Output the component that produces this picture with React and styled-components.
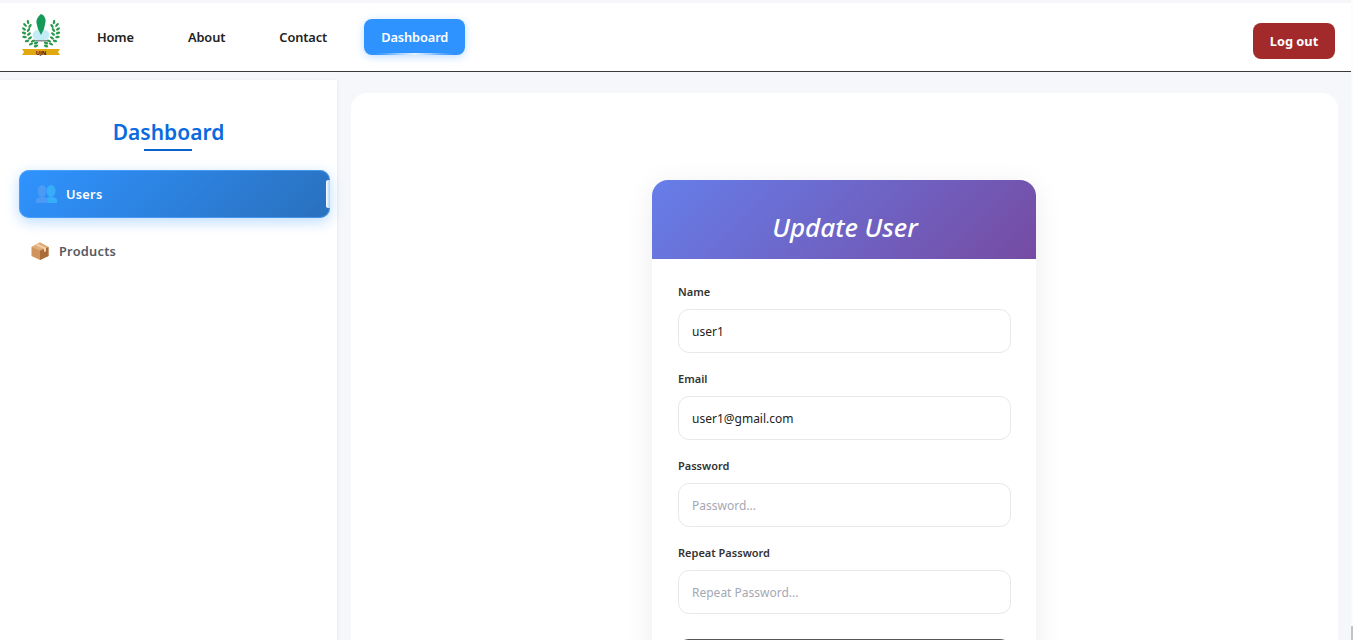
import React from 'react'
import styled, { createGlobalStyle } from 'styled-components'

const GlobalStyle = createGlobalStyle`
  body {
    margin: 0;
    background: #f6f7fa;
    font-family: "Noto Sans", "Open Sans", sans-serif;
    color: #222;
  }
  * {
    box-sizing: border-box;
  }
`

// leaves along one side of the wreath, the other side is mirrored
const leaves = [
  [7, 9, -10],
  [4, 12, -45],
  [9, 13, 35],
  [3, 16, -55],
  [7.5, 17, 40],
  [3, 20, -70],
  [8, 21, 50],
  [3.5, 24, -85],
  [9, 25, 55],
  [6, 28, -105],
  [12, 28, 65],
  [10, 31, -115],
  [15, 30, 70],
  [15, 33, -110],
]

const Wreath = ({ mirror }) => (
  <g transform={mirror ? 'translate(40 0) scale(-1 1)' : undefined} fill="#2b9a4c">
    {leaves.map(([x, y, r]) => (
      <ellipse key={`${x}-${y}`} cx={x} cy={y} rx="1.200" ry="2.300" transform={`rotate(${r} ${x} ${y})`} />
    ))}
  </g>
)

const Logo = () => (
  <svg width="40" height="44" viewBox="0 0 40 44">
    <ellipse cx="20" cy="22" rx="8.500" ry="6" fill="#c4ecf6" />
    <path d="M20 1c3 1 5 4 4.500 8l-1.500 7-3 6-3-6-1.500-6c-.5-4 2-7 4.500-9z" fill="#159a58" />
    <rect x="11" y="27" width="18" height="1.500" fill="#8a8f8f" />
    <Wreath />
    <Wreath mirror />
    <path d="M1 36h38l-2 3 2 3H1l2-3z" fill="#e2a80f" />
    <text x="20" y="41.500" textAnchor="middle" fontSize="5.500" fontWeight="700" fill="#222">UJN</text>
  </svg>
)

const UsersIcon = () => (
  <svg width="21" height="18" viewBox="0 0 21 18">
    <ellipse cx="15" cy="6" rx="4.500" ry="6" fill="#38aefa" />
    <path d="M9 18v-2c0-3 2-4 6-4s6 1 6 4v2z" fill="#38aefa" />
    <ellipse cx="6" cy="6" rx="4.500" ry="6" fill="#4a9af6" />
    <path d="M0 18v-2c0-3 2-4 6-4s6 1 6 4v2z" fill="#4a9af6" />
  </svg>
)

const BoxIcon = () => (
  <svg width="18" height="18" viewBox="0 0 18 18">
    <path d="M0.500 5l8.500-4.500 8.500 4.500v9l-8.500 4-8.500-4z" fill="#cf955c" />
    <path d="M9 8.500l8.500-3.500v9l-8.500 4z" fill="#a96c38" />
    <path d="M0.500 5l8.500-4.500 8.500 4.500-8.500 3.500z" fill="#e0ae7a" />
    <path d="M4.500 3l8.500 3.800v3.200l2-.8V5.900l-8.500-3.900z" fill="#f2d6ae" />
  </svg>
)

const App = () => {
  return (
    <>
      <GlobalStyle />
      <NavBar>
        <NavLeft>
          <LogoBox>
            <Logo />
          </LogoBox>
          <NavLinks>
            <NavLink>Home</NavLink>
            <NavLink>About</NavLink>
            <NavLink>Contact</NavLink>
            <NavLink $active>Dashboard</NavLink>
          </NavLinks>
        </NavLeft>
        <LogoutButton>Log out</LogoutButton>
      </NavBar>
      <Layout>
        <SideBar>
          <SideTitle>Dashboard</SideTitle>
          <SideMenu>
            <SideItem $active>
              <UsersIcon />
              Users
            </SideItem>
            <SideItem>
              <BoxIcon />
              Products
            </SideItem>
          </SideMenu>
        </SideBar>
        <MainPanel>
          <FormCard>
            <FormHeader>Update User</FormHeader>
            <FormBody>
              <Field>
                <Label>Name</Label>
                <Input defaultValue="user1" />
              </Field>
              <Field>
                <Label>Email</Label>
                <Input defaultValue="user1@gmail.com" />
              </Field>
              <Field>
                <Label>Password</Label>
                <Input placeholder="Password..." />
              </Field>
              <Field>
                <Label>Repeat Password</Label>
                <Input placeholder="Repeat Password..." />
              </Field>
              <SubmitButton>Update</SubmitButton>
            </FormBody>
          </FormCard>
        </MainPanel>
      </Layout>
      <ScrollTrack>
        <ScrollThumb />
      </ScrollTrack>
    </>
  )
}

const NavBar = styled.nav`
  margin-top: 3px;
  height: 69px;
  background: #fff;
  border-bottom: 1px solid #3a3a3a;
  display: flex;
  align-items: center;
  justify-content: space-between;
  padding: 0 18px 0 21px;
`

const NavLeft = styled.div`
  display: flex;
  align-items: center;
`

const LogoBox = styled.div`
  width: 40px;
  height: 44px;
  margin-top: -5px;
`

const NavLinks = styled.div`
  display: flex;
  align-items: center;
  gap: 20px;
  margin-left: 19px;
`

const NavLink = styled.a`
  height: 36px;
  padding: 0 17px;
  display: flex;
  align-items: center;
  font-size: 12.8px;
  font-weight: 600;
  letter-spacing: -0.1px;
  border-radius: 8px;
  position: relative;
  color: ${(p) => (p.$active ? '#fff' : '#222')};
  background: ${(p) => (p.$active ? '#2f93ff' : 'transparent')};
  box-shadow: ${(p) => (p.$active ? '0 2px 8px rgba(47, 147, 255, 0.3)' : 'none')};
  &::after {
    content: '';
    display: ${(p) => (p.$active ? 'block' : 'none')};
    position: absolute;
    left: 10%;
    right: 10%;
    bottom: 0;
    height: 2px;
    border-radius: 50%;
    background: linear-gradient(90deg, transparent, #eaf4ff, transparent);
  }
`

const LogoutButton = styled.button`
  width: 82px;
  height: 36px;
  margin-top: 8px;
  border: 0;
  border-radius: 8px;
  background: #a32a2a;
  color: #fff;
  font-family: inherit;
  font-size: 12.8px;
  font-weight: 700;
`

const Layout = styled.div`
  display: flex;
  align-items: flex-start;
  gap: 14px;
  padding-right: 15px;
`

const SideBar = styled.aside`
  flex: 0 0 337px;
  align-self: stretch;
  margin-top: 8px;
  padding-top: 37px;
  background: #fff;
  box-shadow: 1px 0 3px rgba(0, 0, 0, 0.05);
`

const SideTitle = styled.h2`
  margin: 0 0 19px;
  padding-bottom: 4px;
  position: relative;
  text-align: center;
  font-size: 21px;
  line-height: 30px;
  font-weight: 600;
  color: #0a6ae0;
  &::after {
    content: '';
    position: absolute;
    left: 50%;
    bottom: 0;
    width: 48px;
    height: 2px;
    margin-left: -25px;
    background: #0a62cf;
  }
`

const SideMenu = styled.div`
  display: flex;
  flex-direction: column;
  gap: 9px;
  padding: 0 7px 0 19px;
`

const SideItem = styled.div`
  height: 48px;
  display: flex;
  align-items: center;
  position: relative;
  font-size: 12.8px;
  font-weight: 600;
  letter-spacing: 0.25px;
  border-radius: 10px;
  gap: ${(p) => (p.$active ? '9px' : '10px')};
  padding-left: ${(p) => (p.$active ? '17px' : '12px')};
  color: ${(p) => (p.$active ? '#fff' : '#555a63')};
  background: ${(p) => (p.$active ? 'linear-gradient(135deg, #2f93ff, #2a70bd)' : 'transparent')};
  box-shadow: ${(p) => (p.$active ? '0 4px 14px rgba(47, 147, 255, 0.32), inset 0 0 0 1px rgba(90, 170, 255, 0.6)' : 'none')};
  &::after {
    content: '';
    display: ${(p) => (p.$active ? 'block' : 'none')};
    position: absolute;
    right: 0;
    top: 10px;
    width: 4px;
    height: 28px;
    background: linear-gradient(90deg, #fff, #a9d2ff);
    border-radius: 2px 0 0 2px;
  }
`

const MainPanel = styled.main`
  flex: 1;
  margin-top: 21px;
  padding: 87px 1px 40px 0;
  background: #fff;
  border-radius: 16px;
  display: flex;
  justify-content: center;
`

const FormCard = styled.div`
  width: 384px;
  background: #fff;
  border-radius: 16px;
  overflow: hidden;
  box-shadow: 0 6px 30px rgba(0, 0, 0, 0.08);
`

const FormHeader = styled.h2`
  margin: 0;
  height: 79px;
  padding: 29px 0 0 2px;
  background: linear-gradient(135deg, #667eea, #764ba2);
  color: #fff;
  text-align: center;
  font-size: 26px;
  line-height: 36px;
  font-weight: 500;
  font-style: italic;
`

const FormBody = styled.div`
  padding: 25px 25px 30px 26px;
  display: flex;
  flex-direction: column;
  gap: 18px;
`

const Field = styled.div`
  display: flex;
  flex-direction: column;
  gap: 10px;
`

const Label = styled.label`
  font-size: 11px;
  line-height: 15px;
  font-weight: 600;
  color: #333;
`

const Input = styled.input`
  height: 44px;
  padding: 0 13px;
  border: 1px solid #e8e8ec;
  border-radius: 11px;
  outline: none;
  font-family: inherit;
  font-size: 12px;
  color: #222;
  &::placeholder {
    color: #a4a8b4;
  }
`

const SubmitButton = styled.button`
  margin-top: 7px;
  height: 44px;
  border: 0;
  border-top: 1px solid #555;
  border-radius: 11px;
  background: linear-gradient(135deg, #667eea, #764ba2);
  color: #fff;
  font-family: inherit;
  font-size: 14px;
  font-weight: 600;
`

const ScrollTrack = styled.div`
  position: fixed;
  top: 0;
  right: 0;
  bottom: 0;
  width: 2px;
  background: #fbfbfb;
  display: flex;
  align-items: flex-end;
`

const ScrollThumb = styled.div`
  width: 100%;
  height: 14px;
  background: #c4c4c4;
`

export default App
